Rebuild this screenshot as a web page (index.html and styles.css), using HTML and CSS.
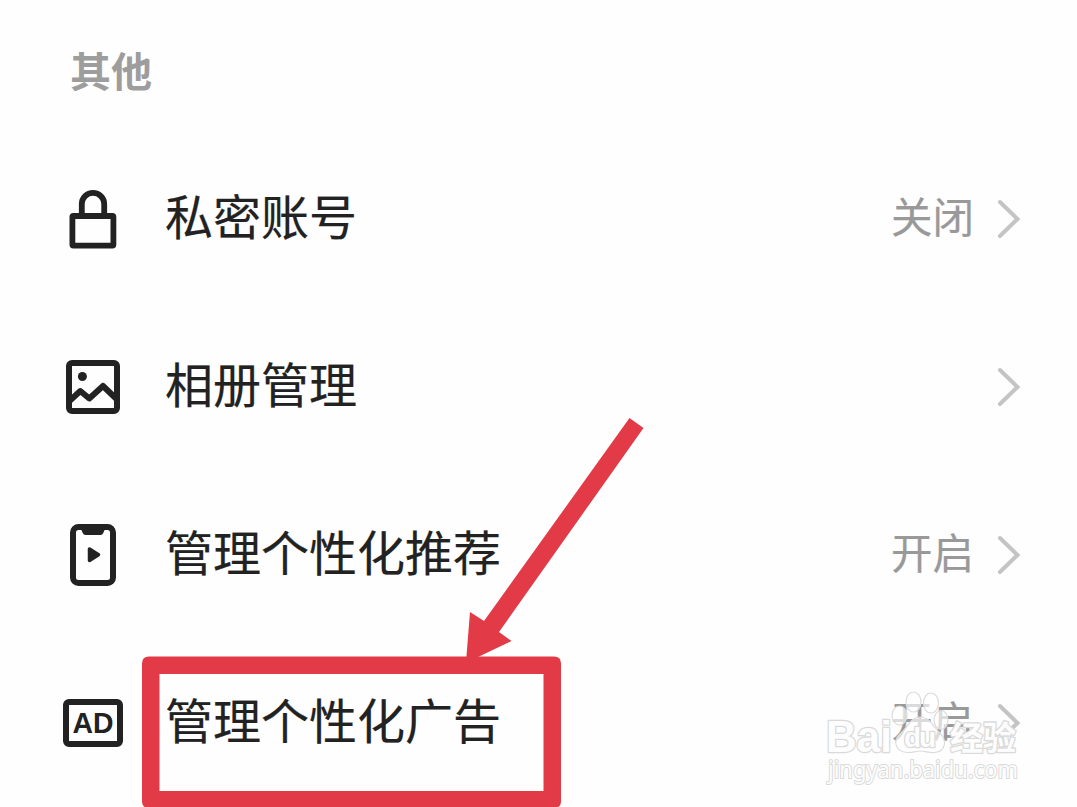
FILE: index.html
```html
<!DOCTYPE html>
<html lang="zh-CN">
<head>
<meta charset="utf-8">
<title>其他</title>
<link rel="stylesheet" href="styles.css">
</head>
<body>
<main class="settings">
  <h2 class="section-title">其他</h2>
  <ul class="list">
    <li class="row">
      <svg class="icon" viewBox="0 0 66 66" fill="none" stroke="#222" stroke-width="5.8">
        <path d="M21.800 30V19a11.200 11.200 0 0 1 22.400 0V30"/>
        <rect x="12.400" y="31" width="41" height="29.600" rx="1"/>
      </svg>
      <span class="label">私密账号</span>
      <span class="status">关闭</span>
      <svg class="chevron" viewBox="0 0 24 40"><path d="M3 3l17.5 17L3 37"/></svg>
    </li>
    <li class="row">
      <svg class="icon" viewBox="0 0 66 66" fill="none" stroke="#222" stroke-width="6">
        <rect x="9" y="10" width="48" height="48" rx="3"/>
        <path d="M10 47.500L20.300 38L29.300 45.500L43 33L56 45.500" stroke-linejoin="round"/>
        <circle cx="22.400" cy="23.500" r="4.500" fill="#222" stroke="none"/>
      </svg>
      <span class="label">相册管理</span>
      <svg class="chevron" viewBox="0 0 24 40"><path d="M3 3l17.5 17L3 37"/></svg>
    </li>
    <li class="row">
      <svg class="icon" viewBox="0 0 66 66" fill="none" stroke="#222" stroke-width="6">
        <rect x="13" y="6" width="40" height="56" rx="5.500"/>
        <path d="M21 8h24l-1.500 3.500Q42.500 14 40.500 14h-15Q23.500 14 22.500 11.500z" fill="#222" stroke="none"/>
        <path d="M29.500 28v11.500L38.500 33.700z" fill="#222" stroke-width="3.500" stroke-linejoin="round"/>
      </svg>
      <span class="label">管理个性化推荐</span>
      <span class="status">开启</span>
      <svg class="chevron" viewBox="0 0 24 40"><path d="M3 3l17.5 17L3 37"/></svg>
    </li>
    <li class="row">
      <svg class="icon" viewBox="0 0 66 66">
        <rect x="6" y="13" width="54" height="42" rx="3" fill="none" stroke="#222" stroke-width="6"/>
        <text class="ad" x="12.500" y="44" textLength="41" lengthAdjust="spacingAndGlyphs">AD</text>
      </svg>
      <span class="label">管理个性化广告</span>
      <span class="status">开启</span>
      <svg class="chevron" viewBox="0 0 24 40"><path d="M3 3l17.5 17L3 37"/></svg>
    </li>
  </ul>

  <svg class="overlay" viewBox="0 0 1077 807">
    <g class="watermark">
      <ellipse cx="899.500" cy="715.500" rx="7.500" ry="9.500"/>
      <ellipse cx="913.500" cy="702" rx="7.500" ry="10"/>
      <ellipse cx="931" cy="703" rx="7.500" ry="10"/>
      <ellipse cx="941" cy="720" rx="7" ry="9.500"/>
      <path d="M920 717C910 717 908 728 900 734C892 741 896 752.500 908 752.500C914 752.500 916 751 920 751C926 751 928 753 935 752.500C946 751 947 740 940 733C932 726 930 717 920 717Z"/>
      <text class="brand" x="826" y="751.500" textLength="66" lengthAdjust="spacingAndGlyphs">Bai</text>
      <text class="brand-du" x="904" y="747" textLength="32">du</text>
      <text class="brand-cn" x="950" y="750" textLength="66">经验</text>
      <text class="site" x="828" y="777.500" textLength="190" lengthAdjust="spacingAndGlyphs">jingyan.baidu.com</text>
    </g>
    <g class="marker">
      <path d="M629.500 418L643.500 428L499 632L511.500 641L478 657L466 662L470 612L484 621Z"/>
      <path fill-rule="evenodd" d="M149 656.500H554Q561 656.500 561 663.500V801Q561 808 554 808H149Q142 808 142 801V663.500Q142 656.500 149 656.500ZM159.500 674V791H543.500V674Z"/>
    </g>
  </svg>
</main>
</body>
</html>
```
FILE: styles.css
```css
* {
  box-sizing: border-box;
}

body {
  margin: 0;
  background: #fefefe;
  font-family: "Noto Sans CJK SC", sans-serif;
  overflow: hidden;
}

.settings {
  position: relative;
  width: 1077px;
  height: 807px;
  overflow: hidden;
}

.section-title {
  height: 134px;
  margin: 0;
  padding: 39px 0 0 70px;
  color: #9d9d9d;
  font-size: 41px;
  font-weight: 700;
  line-height: 60px;
}

.list {
  margin: 0;
  padding: 0;
  list-style: none;
}

.row {
  display: flex;
  align-items: center;
  height: 168px;
  padding: 0 56px 0 60px;
}

.icon {
  flex: none;
  width: 66px;
  height: 66px;
}

.label {
  flex: 1;
  margin-left: 39px;
  padding-bottom: 9px;
  color: #222;
  font-size: 48px;
  line-height: 70px;
  white-space: nowrap;
  -webkit-text-stroke: 0.2px #222;
}

.status {
  margin-right: 23px;
  padding-bottom: 7px;
  color: #999;
  font-size: 41.5px;
  line-height: 60px;
  -webkit-text-stroke: 0.2px #999;
}

.chevron {
  flex: none;
  width: 24px;
  height: 40px;
  margin-top: 1px;
  fill: none;
  stroke: #c4c4c4;
  stroke-width: 4;
  stroke-linecap: round;
}

.ad {
  fill: #222;
  font: 700 30px "Liberation Sans", sans-serif;
}

.overlay {
  position: absolute;
  inset: 0;
  width: 1077px;
  height: 807px;
}

.marker {
  fill: #e23a46;
}

.watermark {
  fill: #fff;
  fill-opacity: 0.65;
  stroke: #dcdcdc;
  stroke-width: 1.2;
}

.watermark text {
  fill-opacity: 0.95;
  stroke: #dadada;
  stroke-width: 2.6;
  stroke-linejoin: round;
  paint-order: stroke;
}

.watermark .brand {
  font: 700 44px "Liberation Sans", sans-serif;
}

.watermark .brand-du {
  font: 700 28px "Liberation Sans", sans-serif;
}

.watermark .brand-cn {
  font: 700 33px "Noto Sans CJK SC", sans-serif;
}

.watermark .site {
  font: 400 23px "Noto Sans", sans-serif;
  stroke-width: 2;
}
```
